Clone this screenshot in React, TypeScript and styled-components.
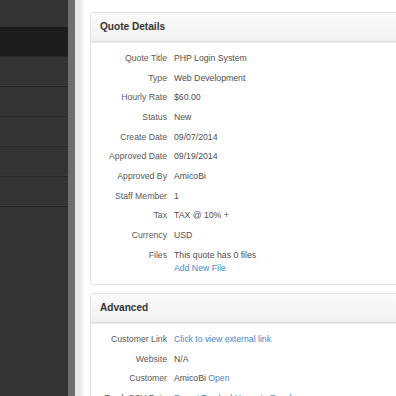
import React, { FC } from 'react';
import styled, { createGlobalStyle } from 'styled-components';

const Global = createGlobalStyle`
    html, body {
        margin: 0;
        padding: 0;
        width: 396px;
        height: 396px;
        overflow: hidden;
        background: #fff;
        font-family: "Liberation Sans", Arial, sans-serif;
    }
`;

const Layout = styled.div`
    display: flex;
    width: 396px;
    height: 396px;
    overflow: hidden;
`;

const Sidebar = styled.div`
    width: 68px;
    flex-shrink: 0;
    background: #343434;
    padding-top: 27px;
    box-sizing: border-box;
`;

const SideItem = styled.div<{ $active?: boolean }>`
    height: 29px;
    border-bottom: 1px solid #2a2a2a;
    background: ${p => (p.$active ? '#1c1c1c' : '#343434')};
    box-shadow: ${p => (p.$active ? 'none' : 'inset 0 -1px 0 #383838')};
`;

const Divider = styled.div`
    width: 7px;
    flex-shrink: 0;
    background: #6e6e6e;
`;

const Main = styled.div`
    flex: 1;
    padding: 12px 0 0 15px;
    display: flex;
    flex-direction: column;
    gap: 8px;
    background: linear-gradient(to right, #e6e6e6 0, #e8e8e8 5px, #f2f2f2 7px, #fcfcfc 9px, #fff 11px);
    min-width: 0;
`;

const Panel = styled.div`
    width: 330px;
    flex-shrink: 0;
    border: 1px solid #e2e2e2;
    border-radius: 3px;
    background: #fff;
    padding-bottom: 6px;
`;

const PanelHead = styled.div`
    height: 28px;
    line-height: 28px;
    padding-left: 9px;
    font-size: 10.1px;
    font-weight: bold;
    color: #333;
    background: linear-gradient(#fbfbfb, #f1f1f1);
    border-bottom: 1px solid #d9d9d9;
    box-shadow: 0 1px 0 #ececec;
`;

const PanelBody = styled.div`
    padding-top: 6.5px;
`;

const DetailRow = styled.div`
    display: flex;
    gap: 7px;
    padding: 3.35px 0;
    font-size: 8.7px;
    line-height: 13px;
    color: #5a5a5a;
`;

const Label = styled.div`
    width: 76px;
    flex-shrink: 0;
    text-align: right;
`;

const Value = styled.div`
    color: #4e4e4e;
    white-space: nowrap;
`;

const Line = styled.div``;

const A = styled.span`
    color: #4a86c8;
`;

type Row = { label: string; value: React.ReactNode };

const quoteRows: Array<Row> = [
    { label: 'Quote Title', value: 'PHP Login System' },
    { label: 'Type', value: 'Web Development' },
    { label: 'Hourly Rate', value: '$60.00' },
    { label: 'Status', value: 'New' },
    { label: 'Create Date', value: '09/07/2014' },
    { label: 'Approved Date', value: '09/19/2014' },
    { label: 'Approved By', value: 'AmicoBi' },
    { label: 'Staff Member', value: '1' },
    { label: 'Tax', value: 'TAX @ 10% +' },
    { label: 'Currency', value: 'USD' },
    {
        label: 'Files',
        value: (
            <>
                <Line>This quote has 0 files</Line>
                <Line>
                    <A>Add New File</A>
                </Line>
            </>
        ),
    },
];

const advancedRows: Array<Row> = [
    { label: 'Customer Link', value: <A>Click to view external link</A> },
    { label: 'Website', value: 'N/A' },
    {
        label: 'Customer',
        value: (
            <>
                AmicoBi <A>Open</A>
            </>
        ),
    },
    { label: 'Track CSV Data', value: <A>Export Tracked Hours to Excel</A> },
];

const Details: FC<{ rows: Array<Row> }> = ({ rows }) => (
    <PanelBody>
        {rows.map(r => (
            <DetailRow key={r.label}>
                <Label>{r.label}</Label>
                <Value>{r.value}</Value>
            </DetailRow>
        ))}
    </PanelBody>
);

const App: FC = () => {
    return (
        <Layout>
            <Global />
            <Sidebar>
                <SideItem $active />
                <SideItem />
                <SideItem />
                <SideItem />
                <SideItem />
                <SideItem />
            </Sidebar>
            <Divider />
            <Main>
                <Panel>
                    <PanelHead>Quote Details</PanelHead>
                    <Details rows={quoteRows} />
                </Panel>
                <Panel>
                    <PanelHead>Advanced</PanelHead>
                    <Details rows={advancedRows} />
                </Panel>
            </Main>
        </Layout>
    );
};

export default App;
